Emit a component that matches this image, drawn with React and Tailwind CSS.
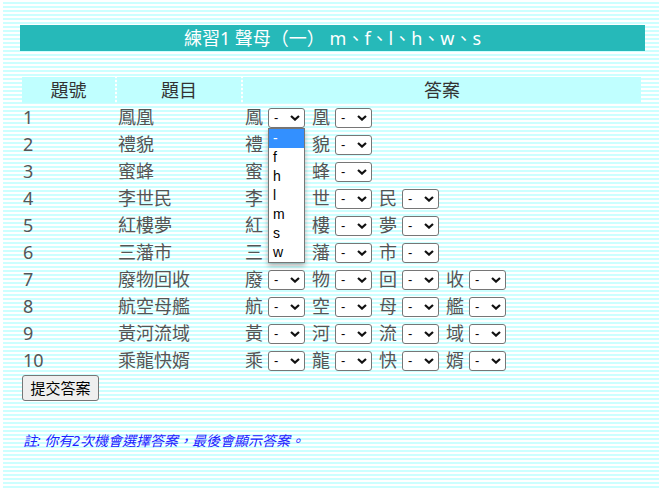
import { useState } from "react";

const rows = [
  "鳳凰",
  "禮貌",
  "蜜蜂",
  "李世民",
  "紅樓夢",
  "三藩市",
  "廢物回收",
  "航空母艦",
  "黃河流域",
  "乘龍快婿",
];

const letters = ["-", "f", "h", "l", "m", "s", "w"];

const cjk = { fontFamily: '"Noto Sans", "Noto Sans CJK TC", sans-serif' };
const arial = { fontFamily: '"Liberation Sans", Arial, sans-serif' };

// Chevron for the select box
const Chevron = () => (
  <svg
    width="10"
    height="6"
    viewBox="0 0 10 6"
    className="absolute right-[5px] top-[7px] pointer-events-none"
  >
    <path d="M1 1l4 3.6L9 1" fill="none" stroke="#111" strokeWidth="2.2" />
  </svg>
);

const Pick = ({ open }) => {
  const [value, setValue] = useState("-");

  return (
    <span className="relative block w-[37px] h-[20px] ml-[5px] mr-[7px] shrink-0">
      <select
        value={value}
        onChange={(e) => setValue(e.target.value)}
        className="appearance-none block w-full h-full border border-[#767676] rounded-[3px] bg-white pl-[5px] text-[13px] text-black leading-[18px]"
        style={arial}
      >
        {letters.map((l) => (
          <option key={l} value={l}>
            {l}
          </option>
        ))}
      </select>
      <Chevron />

      {/* Open dropdown list */}
      {open && (
        <div
          className="absolute left-0 top-[20px] z-10 w-[37px] border border-[#767676] bg-white shadow-[0_3px_5px_rgba(0,0,0,0.3)]"
          style={arial}
        >
          {letters.map((l, i) => (
            <div
              key={l}
              className={
                i === 0
                  ? "h-[19px] pl-[4px] text-[14px] leading-[19px] bg-[#3390ff] text-white"
                  : "h-[19px] pl-[4px] text-[14px] leading-[19px] text-black"
              }
            >
              {l}
            </div>
          ))}
        </div>
      )}
    </span>
  );
};

const App = () => {
  return (
    <div className="min-h-screen bg-white" style={cjk}>
      <div className="ml-[3px] min-h-screen bg-[repeating-linear-gradient(180deg,#ffffff_0px,#ffffff_2px,#ccffff_2px,#ccffff_4px)] pl-[17px] pt-[25px]">
        {/* Title */}
        <div className="w-[625px] h-[26px] bg-[#26b9b9] text-white text-[18px] leading-[26px] text-center">
          練習1 聲母（一） m、f、l、h、w、s
        </div>

        {/* Quiz */}
        <table className="mt-[24px] w-[623px] border-separate border-spacing-[2px] text-[18px] text-[#555]">
          <thead>
            <tr>
              <th className="w-[93px] h-[26px] p-0 bg-[#c0ffff] font-normal text-[#333] leading-[26px]">
                題號
              </th>
              <th className="w-[124px] h-[26px] p-0 bg-[#c0ffff] font-normal text-[#333] leading-[26px]">
                題目
              </th>
              <th className="h-[26px] p-0 bg-[#c0ffff] font-normal text-[#333] leading-[26px]">
                答案
              </th>
            </tr>
          </thead>
          <tbody>
            {rows.map((word, r) => (
              <tr key={word}>
                <td className="h-[25px] p-0 pl-[1px] leading-[25px]">{r + 1}</td>
                <td className="h-[25px] p-0 pl-[1px] leading-[25px]">{word}</td>
                <td className="h-[25px] p-0 pl-[2px] leading-[25px]">
                  <div className="flex items-center h-[25px]">
                    {[...word].map((ch, i) => (
                      <div key={i} className="flex items-center">
                        <span className="w-[18px]">{ch}</span>
                        <Pick open={r === 0 && i === 0} />
                      </div>
                    ))}
                  </div>
                </td>
              </tr>
            ))}
          </tbody>
        </table>

        <button className="ml-[2px] w-[77px] h-[26px] border border-[#767676] rounded-[3px] bg-[#efefef] text-[15px] text-black leading-none">
          提交答案
        </button>

        <p className="mt-[30px] ml-[3px] text-[14px] leading-[20px] italic text-[#2020ff]">
          註: 你有2次機會選擇答案，最後會顯示答案。
        </p>
      </div>
    </div>
  );
};

export default App;
